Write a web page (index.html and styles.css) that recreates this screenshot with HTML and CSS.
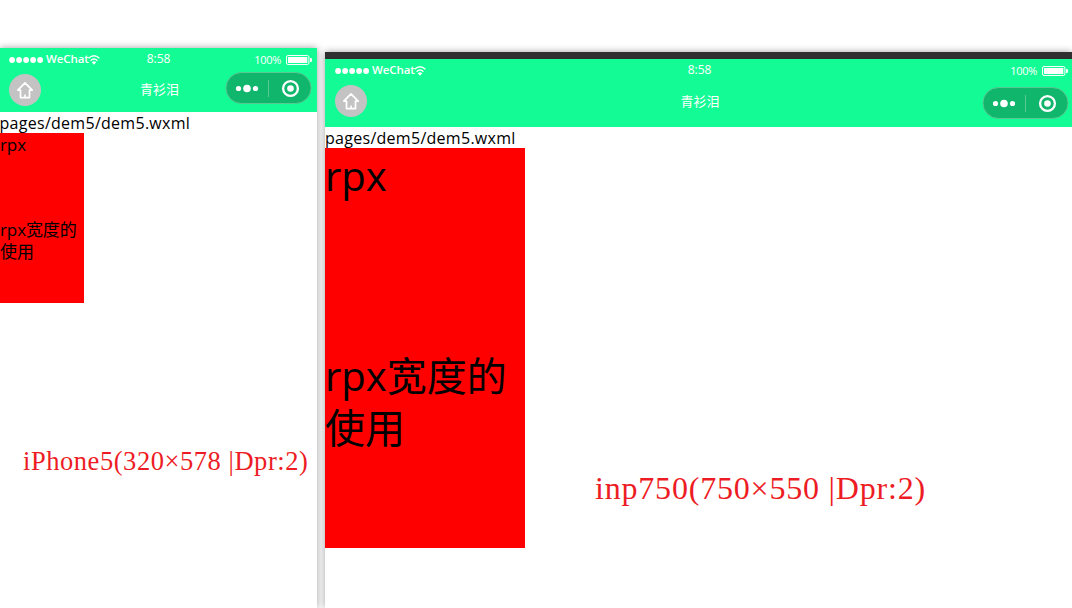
FILE: index.html
```html
<!DOCTYPE html>
<html lang="zh">
<head>
<meta charset="utf-8">
<title>rpx</title>
<link rel="stylesheet" href="styles.css">
</head>
<body>
<svg class="defs" width="0" height="0">
  <symbol id="dots" viewBox="0 0 35 8"><g fill="#fff"><circle cx="3.1" cy="4" r="2.9"/><circle cx="10.1" cy="4" r="2.9"/><circle cx="17.1" cy="4" r="2.9"/><circle cx="24.1" cy="4" r="2.9"/><circle cx="31.1" cy="4" r="2.9"/></g></symbol>
  <symbol id="wifi" viewBox="0 0 12 10"><g fill="none" stroke="#fff" stroke-width="1.4"><path d="M.6 3.3Q6-1.6 11.4 3.3"/><path d="M2.6 5.7Q6 2.4 9.4 5.7"/></g><path fill="#fff" d="M3.8 7.3Q6 5.3 8.2 7.3L6 9.7Z"/></symbol>
  <symbol id="battery" viewBox="0 0 26 10"><rect x=".5" y=".5" width="22.4" height="9" rx="1.5" fill="none" stroke="#fff"/><rect x="2" y="2" width="19.3" height="6" fill="#fff"/><path fill="#fff" d="M24 3h1.2q.8 0 .8 2t-.8 2H24Z"/></symbol>
  <symbol id="home" viewBox="0 0 32 32"><circle cx="16" cy="16" r="16" fill="#c3c3c3"/><path fill="none" stroke="#fff" stroke-width="1.7" stroke-linejoin="round" d="M16 8.8L8.8 16.2H11.5V23.6H20.5V16.2H23.2Z"/><path stroke="#fff" stroke-width="1.6" d="M16 20.5V24"/></symbol>
  <symbol id="capsule" viewBox="0 0 87 32"><rect x=".9" y=".5" width="85.2" height="31" rx="15.5" fill="#10b66b" stroke="#58c995"/><g fill="#fff"><circle cx="13.5" cy="16.5" r="2.6"/><circle cx="22" cy="16.5" r="3.8"/><circle cx="30.5" cy="16.5" r="2.6"/><circle cx="65.5" cy="16.5" r="3.3"/></g><circle cx="65.5" cy="16.5" r="7.4" fill="none" stroke="#fff" stroke-width="2.3"/><path stroke="#58c995" d="M43.5 8V25"/></symbol>
</svg>
<section class="phone small">
  <header class="bar">
    <div class="status">
      <div class="carrier"><svg class="dots"><use href="#dots"/></svg><span class="name">WeChat</span><svg class="wifi"><use href="#wifi"/></svg></div>
      <span class="time">8:58</span>
      <div class="power"><span>100%</span><svg class="battery"><use href="#battery"/></svg></div>
    </div>
    <div class="nav">
      <svg class="home"><use href="#home"/></svg>
      <h1 class="title">青衫泪</h1>
      <svg class="capsule"><use href="#capsule"/></svg>
    </div>
  </header>
  <main class="page">
    <div class="path">pages/dem5/dem5.wxml</div>
    <div class="box"><div class="half">rpx</div><div class="half">rpx宽度的<br>使用</div></div>
    <p class="note">iPhone5(320×578 |Dpr:2)</p>
  </main>
</section>
<section class="phone large">
  <header class="bar">
    <div class="status">
      <div class="carrier"><svg class="dots"><use href="#dots"/></svg><span class="name">WeChat</span><svg class="wifi"><use href="#wifi"/></svg></div>
      <span class="time">8:58</span>
      <div class="power"><span>100%</span><svg class="battery"><use href="#battery"/></svg></div>
    </div>
    <div class="nav">
      <svg class="home"><use href="#home"/></svg>
      <h1 class="title">青衫泪</h1>
      <svg class="capsule"><use href="#capsule"/></svg>
    </div>
  </header>
  <main class="page">
    <div class="path">pages/dem5/dem5.wxml</div>
    <div class="box"><div class="half">rpx</div><div class="half">rpx宽度的<br>使用</div></div>
    <p class="note">inp750(750×550 |Dpr:2)</p>
  </main>
</section>
</body>
</html>
```
FILE: styles.css
```css
* { box-sizing: border-box; }
body {
  margin: 0;
  height: 608px;
  overflow: hidden;
  display: flex;
  gap: 8px;
  background: #fff;
  font-family: "Open Sans", "Noto Sans CJK SC", sans-serif;
  color: #000;
}
.defs { position: absolute; }
svg { display: block; flex: none; }
.phone { background: #fff; box-shadow: 0 0 7px rgba(0, 0, 0, .38); }
.small { width: 317px; margin-top: 48px; }
.large { width: 747px; margin-top: 52px; border-top: 7px solid #2f2f2f; }
.bar { background: #13fb94; color: #fff; }
.small .bar { height: 64px; padding: 0 6px 0 9px; }
.large .bar { height: 68px; padding: 0 4px 0 10px; }
.status {
  height: 24px;
  display: grid;
  grid-template-columns: 1fr auto 1fr;
  align-items: center;
  font-size: 12px;
  line-height: 16px;
}
.carrier { display: flex; align-items: center; }
.dots { width: 35px; height: 8px; margin-right: 2px; }
.name { width: 43px; white-space: nowrap; font-size: 11.5px; font-weight: 600; letter-spacing: -.1px; margin-top: -2px; }
.time { font-weight: 500; padding-right: 3px; margin-top: -2px; }
.large .time { padding-right: 4px; }
.wifi { width: 12px; height: 10px; margin: -1px 0 0 -1px; }
.power { display: flex; align-items: center; justify-content: flex-end; gap: 5px; font-size: 11px; letter-spacing: -.3px; }
.small .power { margin-right: -1px; }
.battery { width: 26px; height: 10px; }
.nav {
  display: grid;
  grid-template-columns: 1fr auto 1fr;
  align-items: start;
}
.home { width: 32px; height: 32px; margin-top: 2px; }
.capsule { width: 87px; height: 32px; justify-self: end; margin-right: -1px; }
.large .capsule { margin-top: 4px; }
.title { margin: 8px 0 0; padding-right: 1px; font: 13px/18px "Noto Sans CJK SC", sans-serif; }
.large .title { margin-top: 9px; padding-right: 3px; }
.path { height: 21px; font-size: 16px; line-height: 22px; letter-spacing: .28px; margin-left: -.5px; white-space: nowrap; }
.large .path { margin-left: 0; }
.box { background: #f00; white-space: nowrap; }
.small .box { width: 84px; height: 170px; font-size: 17px; line-height: 22px; letter-spacing: -.1px; padding-top: 1px; }
.small .half { height: 85px; }
.large .box { width: 200px; height: 400px; font-size: 40px; line-height: 52px; padding-top: 2px; }
.large .half { height: 200px; }
.note { margin: 0; color: #ed1c24; font-family: "Liberation Serif", serif; white-space: nowrap; }
.small .note { padding: 143px 0 0 23px; font-size: 26.5px; line-height: 30px; letter-spacing: .55px; }
.large .note { margin-top: -80px; padding-left: 270px; font-size: 32px; line-height: 40px; letter-spacing: .8px; }
```
